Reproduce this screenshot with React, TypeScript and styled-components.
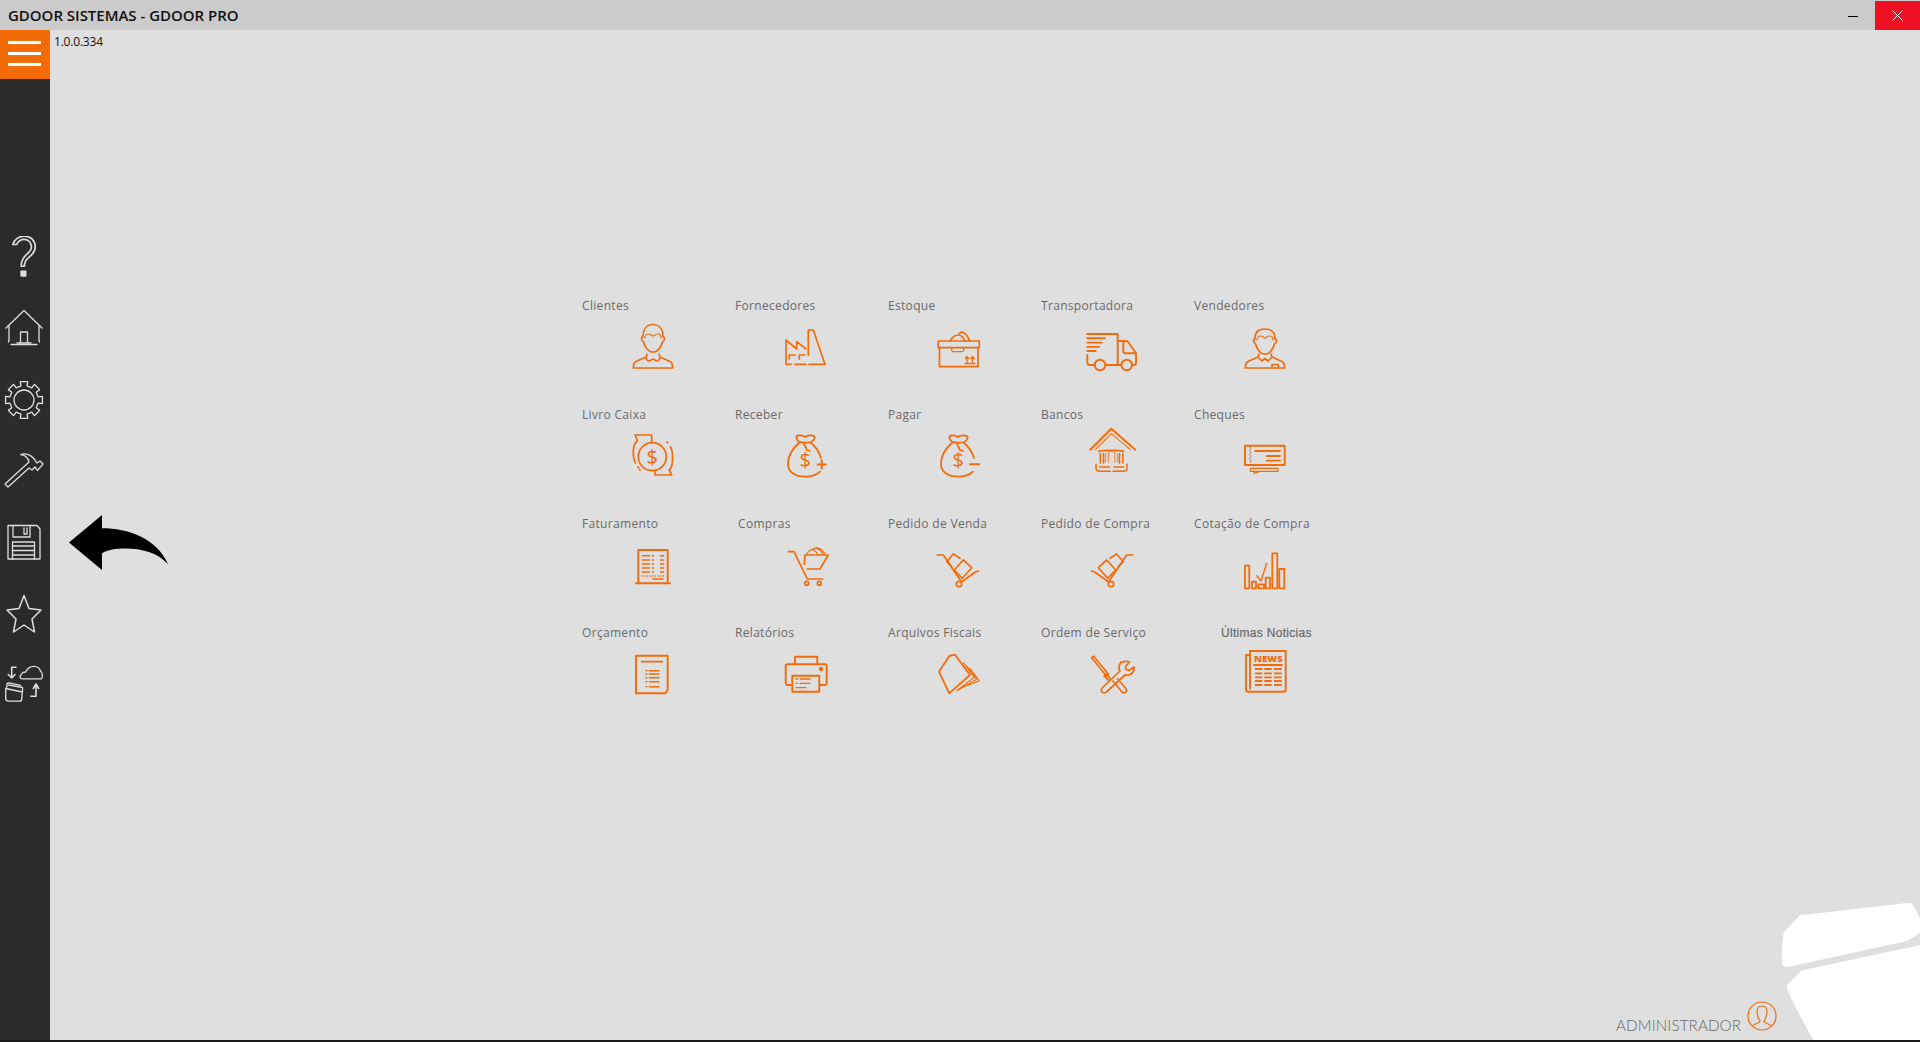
import React from "react";
import styled, { createGlobalStyle } from "styled-components";

const ORANGE = "#f26c0c";

const Global = createGlobalStyle`
  html, body { margin: 0; padding: 0; height: 100%; overflow: hidden; background: #dfdfdf; }
  #root { height: 100%; }
`;

const Page = styled.div`
  width: 1920px;
  height: 1042px;
  display: flex;
  flex-direction: column;
  position: relative;
  overflow: hidden;
  background: #dfdfdf;
  font-family: "Open Sans", sans-serif;
`;

const TitleBar = styled.header`
  height: 30px;
  flex: none;
  display: flex;
  align-items: stretch;
  background: #cbcbcb;
`;

const Title = styled.h1`
  margin: 0;
  flex: 1;
  padding-left: 8px;
  font: 600 15px/31px "Open Sans", sans-serif;
  letter-spacing: -0.02px;
  color: #111;
`;

const Minimize = styled.div`
  width: 45px;
  box-sizing: border-box;
  display: flex;
  align-items: center;
  justify-content: center;
  &::before { content: ""; width: 10px; height: 1px; background: #000; margin-top: 2px; }
`;

const Close = styled.div`
  width: 45px;
  margin-top: 1px;
  display: flex;
  align-items: center;
  justify-content: center;
  background: #ed1123;
`;

const Body = styled.div`
  flex: 1;
  display: flex;
  min-height: 0;
`;

const Sidebar = styled.nav`
  width: 50px;
  flex: none;
  display: flex;
  flex-direction: column;
  background: #2b2b2b;
`;

const MenuButton = styled.div`
  height: 49px;
  box-sizing: border-box;
  padding-bottom: 3px;
  flex: none;
  display: flex;
  flex-direction: column;
  align-items: center;
  justify-content: center;
  gap: 8px;
  background: #f26b06;
  margin-bottom: 143px;
`;

const MenuBar = styled.span`
  width: 33px;
  height: 3px;
  margin-right: 1px;
  background: #fff;
  box-shadow: 0 0 1px rgba(255, 255, 255, 0.5);
`;

const SideButton = styled.div`
  height: 71.3px;
  box-sizing: border-box;
  padding-right: 2px;
  flex: none;
  display: flex;
  align-items: center;
  justify-content: center;
`;

const SideIcon = styled.svg`
  width: 44px;
  height: 44px;
  fill: none;
  stroke: #dedede;
  stroke-width: 1.3;
  stroke-linejoin: round;
  stroke-linecap: round;
`;

const Main = styled.main`
  flex: 1;
  display: flex;
  flex-direction: column;
  min-width: 0;
`;

const Version = styled.div`
  height: 22px;
  padding: 4px 0 0 4px;
  box-sizing: border-box;
  font: 400 12px/16px "Open Sans", sans-serif;
  letter-spacing: -0.2px;
  color: #111;
`;

const Grid = styled.section`
  margin: 245px 0 0 532px;
  display: grid;
  grid-template-columns: repeat(5, 153px);
  grid-auto-rows: 109px;
`;

const Cell = styled.div`
  display: flex;
  flex-direction: column;
  align-items: flex-start;
`;

const Label = styled.span<{ $indent?: number }>`
  height: 17px;
  margin-left: ${(p) => p.$indent ?? 0}px;
  margin-bottom: 4px;
  font: 400 12px/17px "Open Sans", sans-serif;
  letter-spacing: 0.32px;
  white-space: nowrap;
  color: #6a6a6a;
`;

const NewsLabel = styled(Label)`
  font: 400 12px/19px "Liberation Sans", sans-serif;
  letter-spacing: 0.3px;
  -webkit-text-stroke: 0.2px #666;
`;

const IconSvg = styled.svg`
  width: 60px;
  height: 56px;
  margin-left: 41px;
  fill: none;
  stroke: ${ORANGE};
  stroke-width: 1.7;
  stroke-linejoin: round;
  stroke-linecap: round;
  text { fill: ${ORANGE}; stroke: none; font-family: "Open Sans", sans-serif; }
`;

const Footer = styled.footer`
  margin-top: auto;
  height: 40px;
  display: flex;
  align-items: flex-start;
  padding-left: 1566px;
`;

const UserName = styled.span`
  margin-top: 14px;
  font: 300 15.2px/22px "Lato", sans-serif;
  letter-spacing: 0.12px;
  color: #666;
`;

const UserIcon = styled.svg`
  width: 32px;
  height: 32px;
  margin: 0 0 0 5px;
  fill: none;
  stroke: ${ORANGE};
  stroke-width: 1.2;
`;

const BottomLine = styled.div`
  height: 2px;
  flex: none;
  background: #1b1b1b;
`;

const Logo = styled.svg`
  position: absolute;
  right: 0;
  bottom: 2px;
  width: 140px;
  height: 140px;
  fill: #fff;
`;

const BackArrow = styled.svg`
  position: absolute;
  left: 68px;
  top: 515px;
  width: 101px;
  height: 55px;
  fill: #000;
`;

const Icon: React.FC<{ children: React.ReactNode }> = ({ children }) => (
  <IconSvg viewBox="0 0 60 56">{children}</IconSvg>
);

const Person = ({ vendor }: { vendor?: boolean }) => {
  const dy = vendor ? 2 : 0;
  return (
    <Icon>
      <path
        d={`M20 ${19 + dy}c0-8 4-${vendor ? 10 : 12.5} 10-${vendor ? 10 : 12.5}s10 ${vendor ? 2 : 4.5} 10 ${vendor ? 10 : 12.5}c2-.5 2.2 3.6-.6 5-.9 4.5-4.400 10-9.400 10s-8.500-5.500-9.400-10c-2.800-1.400-2.600-5.500-.6-5z`}
      />
      <path d={`M22 ${20 + dy}c0-4 2-4 4-4s3 2 4 2 2-2 5-2c3 0 3 2 3 4`} strokeWidth={1.2} />
      <path d="M24 36l-1 3-10 4.500c-2 1-2.700 3-2.700 6.500h39.400c0-3.500-.7-5.500-2.700-6.500l-10-4.500-1-3" />
      {vendor ? (
        <path d="M23 39l4 4 3-2.500 3 2.500 4-4M37 50v-3.500h6.300V50" />
      ) : (
        <path d="M23 39c0 2 1.500 4 3 4s3-2 4-2 2.500 2 4 2 3-2 3-4" />
      )}
    </Icon>
  );
};

const Factory = () => (
  <Icon>
    <path d="M30 31l-9.300-7.300V31L10 22v24.300h5M19 46.300h11M33 46.300h16L37.300 12h-5v25" />
    <path d="M13.300 41v-4H19M23.300 41v-4H29" />
  </Icon>
);

const BoxIcon = () => (
  <Icon>
    <path d="M9.300 23h41v6.700h-41zM10.500 29.700v19h38.500v-19" />
    <path d="M22.700 29.700v2.500c0 1 1 1.500 2 1.500h8c1 0 2-.5 2-1.500v-2.500" strokeWidth={1.3} />
    <path d="M21 23c2-3.500 5.500-6 8.300-6 2.700 0 5.200 3 6.700 6M30.300 15.300c1-1 3-1.500 4.200-.8 2 1 4.500 4.500 6.500 8.500" />
    <path d="M38 44v-5M36.300 40.500l1.700-2 1.700 2M43.500 44v-5M41.800 40.500l1.700-2 1.700 2M36 45.500h10" strokeWidth={1.3} />
  </Icon>
);

const Truck = () => (
  <Icon>
    <g strokeWidth={1.9}>
      <path d="M5.300 16h30.400v31H23.300M5.300 37v7c0 2 1 3 2.500 3h5.400" />
      <path d="M5.300 20.300H23M5.300 24.600h14.400M5.300 28.900H17M5.300 33H13.700" />
      <circle cx={18} cy={47} r={5.300} />
      <circle cx={44.700} cy={47} r={5.300} />
      <path d="M35.700 47h3.700M50 47h2c1.300 0 2-1 2-2V35.300L46.500 24.500c-.5-1-1-1.500-2.500-1.500h-8.300M41.300 23.500v9.800c0 1.300.7 2 2 2H54" />
    </g>
  </Icon>
);

const Dollar = ({ x, y, size }: { x: number; y: number; size: number }) => (
  <text x={x} y={y} fontSize={size} textAnchor="middle">
    $
  </text>
);

const LivroCaixa = () => (
  <Icon>
    <circle cx={29.300} cy={29.700} r={14} strokeWidth={1.7} />
    <Dollar x={29.300} y={37} size={20} />
    <path d="M28.700 16V8H12l2.500 5.500c-3.500 3-4.800 9-4 15.500 .3 3 1 5 2 7" />
    <path d="M32 43v5h16.700l-2.500-5c3.500-3 3.800-8 3.300-15-.2-3-.8-6-2-8" />
    <path d="M15 40l2 3M44 15l1.500 2" strokeDasharray="1 2" />
  </Icon>
);

const MoneyBag = ({ sign }: { sign: "plus" | "minus" }) => (
  <Icon>
    <path d="M23 16c-6 5-11 12-11 21 0 8 7 12.700 17 12.700 6 0 11-1 15-5" strokeWidth={1.8} />
    <path d="M35 16c4 3 8 9 10 15" strokeWidth={1.8} />
    <path d="M23 15c-2-2-3-3.500-2.500-5.500 1-1.500 6-1.500 8.500.5 2.500-2 7.500-2 9.500-.5 .5 2-1 4-3 5.500-4 1-8 1-12.500 0z" strokeWidth={1.8} />
    <path d="M28 17l3 6 3 1" />
    <Dollar x={29.300} y={40} size={20} />
    {sign === "plus" ? (
      <path d="M41.700 37.500h8M45.700 33.500v8" strokeWidth={2} />
    ) : (
      <path d="M41 37.300h9" strokeWidth={2} />
    )}
  </Icon>
);

const Bank = () => (
  <Icon>
    <path d="M8.300 22.700L29.300 1.700 53.300 22.700" strokeWidth={2} />
    <path d="M13.300 22.700L29.300 6.700 48.300 22.700" strokeWidth={1.1} />
    <path d="M16.700 24.300c5-1.300 20-1.300 25 0" strokeWidth={1.8} />
    <path d="M18.300 36V26.500M21.500 36V26.500M37.500 36V26.500M40.800 36V26.500" strokeWidth={1.6} />
    <path d="M23.500 35V27M26.500 35V26c0-1 1-1.500 3-1.500s3.300.5 3.300 1.500v9M35.500 35V27" strokeWidth={1.2} opacity={0.7} />
    <path d="M14 37.300v4c0 2 1.700 3 4.300 3h10M45 37.300v4c0 2-1.700 3-4.300 3H31M18 40h9.500M32 40h9.500" strokeWidth={1.5} />
  </Icon>
);

const Cheque = () => (
  <Icon>
    <path d="M10 18.700h39.700V38H10z" strokeWidth={1.9} />
    <path d="M15 19.500l1 2-1.500 2 1.500 2-1.500 2 1.500 2-1.500 2 1.500 2-1 2" strokeWidth={1} />
    <path d="M20 24h25M31.700 29H45M31.700 33.700H45" strokeWidth={1.8} />
    <path d="M15.500 41.300H43v3H15.500zM20 44.500l-1 2 6-2" strokeWidth={1.3} />
  </Icon>
);

const Invoice = () => (
  <Icon>
    <path d="M15.300 47.300V14h29.400v33.300M13 47.300h34" strokeWidth={1.9} />
    <path d="M18.700 19.700H27M18.700 24H27M18.700 28H27M18.700 32H27M18.700 36H27M28.700 19.700H31M28.700 24H31M28.700 28H31M28.700 32H31M28.700 36H31M37 19.700h4.300M37 24h4.300M37 28h4.300M37 32h4.300M37 36h4.300" strokeLinecap="butt" strokeWidth={1.6} />
    <path d="M18.700 40h22.600" strokeDasharray="1.300 1.300" strokeLinecap="butt" strokeWidth={1.6} />
    <path d="M30 43h10" strokeWidth={1.5} />
  </Icon>
);

const Cart = () => (
  <Icon>
    <path d="M12.300 15.700H18l13.300 27.300h15.400" />
    <path d="M29 19h23.300L44 33H31.300M29 19l-.7 9.300" />
    <circle cx={30.700} cy={47.300} r={2} />
    <circle cx={43.300} cy={47.300} r={2} />
    <path d="M30.700 18c2-3 5-5 7-4 2 1 3 3 4 4M37 13c3-2 7 0 10 5M41 11.500c3 1 6 3 8 6" strokeWidth={1.2} />
  </Icon>
);

const HandTruck = ({ flip }: { flip?: boolean }) => (
  <Icon>
    <g transform={flip ? "matrix(-1 0 0 1 59 0)" : undefined}>
      <path d="M50.700 19H44.700L26.300 46.300M9.700 35l3.300 1.300 13.300 9.400" />
      <path d="M16.300 31.700L24.700 24l9 10-8 8.300zM28 22.300L34.700 18l6.600 7.700-5 5" />
      <circle cx={29} cy={48} r={2.700} />
    </g>
  </Icon>
);

const BarsCheck = () => (
  <Icon>
    <g strokeWidth={1.8}>
      <path d="M9.900 29.700h4.400v22.600H9.900zM17 45.700h4v6.600h-4zM23.300 48.300H29v4h-5.700zM30.700 41.700H35v10.600h-4.300zM37.300 17.300h5v35h-5zM44.300 33h5v19.300h-5z" />
      <path d="M21.700 39.700L26 45l5.700-17.700" strokeWidth={1.4} />
    </g>
  </Icon>
);

const Document = () => (
  <Icon>
    <path d="M13 10.700h31.700v34l-2 3.600H13z" strokeWidth={1.9} />
    <path d="M18.700 16.700h20.600" strokeWidth={1.8} />
    <path d="M23 25.700h1M23 29h1M23 32.700h1M23 36.700h1M23 41.700h1M26.300 25.700H36M26.300 29H36M26.300 32.700H36M26.300 36.700H36M26.300 41.700H36" strokeWidth={1.4} />
  </Icon>
);

const Printer = () => (
  <Icon>
    <g strokeWidth={1.9}>
      <path d="M19 19.300v-7.600h22.300v7.600" />
      <path d="M15 40h-3.800c-1 0-1.500-.5-1.500-1.500V21c0-1 .5-1.700 1.500-1.700h38c1 0 1.500.7 1.500 1.700v17.500c0 1-.5 1.500-1.500 1.500h-5" />
      <path d="M16.300 30.700h27v16h-27z" />
    </g>
    <circle cx={45} cy={24} r={1.400} fill={ORANGE} />
    <path d="M20 34h1.500M24 34h10M20 38.300h1.500M24 38.300h10M20 42.700h10" strokeWidth={1.3} />
  </Icon>
);

const Files = () => (
  <Icon>
    <path d="M10 26.700L20.300 11 26 9.700 41 30 23.300 45.700 20.300 48.300z" strokeWidth={1.8} />
    <path d="M34.300 17.700l11 14.600-17.600 13.400M37.700 21l10 13.300-18.400 10.700M41 23.300l9.300 12.400L31 43.300" strokeWidth={1.1} />
  </Icon>
);

const Tools = () => (
  <Icon>
    <path d="M9.700 12.700l2-1.500 14.800 18-2 2zM24 29l4 4-2 2-4-4z" strokeWidth={1.7} />
    <path d="M39 17l-2 4c-.5 2 .3 4 1 5L20 43c-1.500 2-.5 5 2 5 1 0 2-.5 3-1.500L43 30c3 .5 6 0 8-3 1-1.500 1.500-3.500 1-5l-5 3.500-3-1-.5-3 4-4.500c-3-1-6-.5-8.500 .5z" strokeWidth={1.7} />
    <path d="M31 36l9 11c2 1.500 4 1 4.500-1 0-1-.5-2-1-3l-8-9" strokeWidth={1.7} />
  </Icon>
);

const News = () => (
  <Icon>
    <path d="M15 44V6h35.700v39c0 1-.6 1.700-1.700 1.700H13c-1.300 0-2-.8-2-2V10h4" strokeWidth={1.9} />
    <text x={19} y={17} fontSize={9.500} fontWeight={800} textLength={28.700}>
      NEWS
    </text>
    <path d="M19 20h28" strokeWidth={2} />
    <path
      d="M20 24h7.300M29.300 24h7.400M39 24h7.700M20 28.300h7.300M29.300 28.300h7.400M39 28.300h7.700M20 32.300h7.300M29.300 32.300h7.400M39 32.300h7.700M20 36h7.300M29.300 36h7.400M39 36h7.700M20 40h7.300M29.300 40h7.400M39 40h7.700"
      strokeWidth={1.8}
      strokeLinecap="butt"
    />
  </Icon>
);

const items: { label: string; icon: React.ReactNode; indent?: number }[] = [
  { label: "Clientes", icon: <Person /> },
  { label: "Fornecedores", icon: <Factory /> },
  { label: "Estoque", icon: <BoxIcon /> },
  { label: "Transportadora", icon: <Truck /> },
  { label: "Vendedores", icon: <Person vendor /> },
  { label: "Livro Caixa", icon: <LivroCaixa /> },
  { label: "Receber", icon: <MoneyBag sign="plus" /> },
  { label: "Pagar", icon: <MoneyBag sign="minus" /> },
  { label: "Bancos", icon: <Bank /> },
  { label: "Cheques", icon: <Cheque /> },
  { label: "Faturamento", icon: <Invoice /> },
  { label: "Compras", icon: <Cart />, indent: 3 },
  { label: "Pedido de Venda", icon: <HandTruck flip /> },
  { label: "Pedido de Compra", icon: <HandTruck /> },
  { label: "Cotação de Compra", icon: <BarsCheck /> },
  { label: "Orçamento", icon: <Document /> },
  { label: "Relatórios", icon: <Printer /> },
  { label: "Arquivos Fiscais", icon: <Files /> },
  { label: "Ordem de Serviço", icon: <Tools /> },
];

const gearPath = (() => {
  const pts: string[] = [];
  const teeth = 8;
  for (let i = 0; i < teeth; i++) {
    const a = (i / teeth) * Math.PI * 2 - Math.PI / 2;
    const w = 0.2;
    const s = Math.PI / teeth;
    const p = (r: number, t: number) =>
      `${(22 + r * Math.cos(t)).toFixed(2)} ${(22 + r * Math.sin(t)).toFixed(2)}`;
    pts.push(`${i === 0 ? "M" : "L"}${p(14.5, a - s * 0.55)}`);
    pts.push(`L${p(18.8, a - w)}`);
    pts.push(`L${p(18.8, a + w)}`);
    pts.push(`L${p(14.5, a + s * 0.55)}`);
  }
  return pts.join(" ") + "Z";
})();

const sideIcons: React.ReactNode[] = [
  <g transform="translate(22 20) scale(1.28) translate(-22.700 -20)">
    <path d="M14 11c1-4 5-6.500 9-6.500 5 0 8.500 3.500 8.500 8.500 0 4-2.500 6-5 8-2.500 2-3.500 4-3.500 7h-2.500c0-3.500 1-6 3.500-8.500 2-2 4.500-3.500 4.500-6.500s-2-6-5.500-6c-2.500 0-5 1.500-6 4z" />
    <path d="M20.500 32h3.500v3.500h-3.500z" fill="#dedede" />
  </g>,
  <>
    <path d="M4 21L22 3.500 40 21M7 19v14l-.6 2M37 19v14l.6 2M9 37.500h26" />
    <path d="M18.500 36V25h7v11M15 36h14" />
  </>,
  <>
    <path d={gearPath} />
    <circle cx={22} cy={22} r={10} />
  </>,
  <path d="M3 34l3 3 21-19 3 2 3-3 2.500 3.400L41 14l-3-3-3 2C32 7 26 2 18.700 4.700 23 5 26 8 27 12z" />,
  <>
    <path d="M6 4.500h29l3 3.500v30H6z" />
    <path d="M11 4.500V16h17V4.500M22 7v6h3V7" />
    <path d="M10.500 38V21h22v17M10.500 25h22M10.500 29.500h22M10.500 34h22" />
  </>,
  <path d="M22 3.500l5 13 12 1.500-9 9 2.500 13L22 33l-10.500 7L14 27l-9-9 12-1.500z" strokeWidth={1.5} />,
  <>
    <path d="M20 15.800c-2.500 0-2.500-3.500-.5-4.500 .5-2 2.500-2.500 4-2 1.500-3.500 5-6 8.500-6s6 2.500 6.500 5c2 .5 2.500 5.500 1 7.500z" />
    <path d="M14 4.200H9.700v9.800M6.300 11.500L9.700 15l3.300-3.500" strokeWidth={1.6} />
    <path d="M4 25.500c.5-2 1.500-3 3-3.500l13.500 2.500v4.500M4.700 22c0-1 .5-2.200 2-2.200l12 2.500M3.700 28v7c0 2 1 3.200 3 3.200h11c1.500 0 2-.7 2-2L20.300 29 3.700 25.500z" />
    <path d="M28.700 33.200H34V21.500M31.300 25.500L34 21l2.700 4.500" strokeWidth={1.6} />
  </>,
];

export default function App() {
  return (
    <Page>
      <Global />
      <TitleBar>
        <Title>GDOOR SISTEMAS - GDOOR PRO</Title>
        <Minimize />
        <Close>
          <svg width="11" height="11" viewBox="0 0 11 11" stroke="#fff" strokeWidth="1">
            <path d="M.5.500l10 10M10.500.500l-10 10" />
          </svg>
        </Close>
      </TitleBar>
      <Body>
        <Sidebar>
          <MenuButton>
            <MenuBar />
            <MenuBar />
            <MenuBar />
          </MenuButton>
          {sideIcons.map((icon, i) => (
            <SideButton key={i}>
              <SideIcon viewBox="0 0 44 44">{icon}</SideIcon>
            </SideButton>
          ))}
        </Sidebar>
        <Main>
          <Version>1.0.0.334</Version>
          <Grid>
            {items.map((it) => (
              <Cell key={it.label}>
                <Label $indent={it.indent}>{it.label}</Label>
                {it.icon}
              </Cell>
            ))}
            <Cell>
              <NewsLabel $indent={27}>Últimas Noticias</NewsLabel>
              <News />
            </Cell>
          </Grid>
          <Footer>
            <UserName>ADMINISTRADOR</UserName>
            <UserIcon viewBox="0 0 32 32">
              <circle cx="16" cy="16" r="14" />
              <path d="M6.500 26c1.500-2 7-3 7.500-4.500 .2-1.500-3-3.500-3-9.500 0-4 2-6 5-6s5 2 5 6c0 6-3.200 8-3 9.500 .5 1.500 6 2.500 7.500 4.500" />
            </UserIcon>
          </Footer>
        </Main>
      </Body>
      <BottomLine />
      <Logo viewBox="0 0 140 140">
        <path d="M23 15l104-12c3-.300 4.500 0 6 2l7 13v13c0 2-1 3-3 4l-10 6L8 67c-3 .5-5-.5-6-3-.5-10 0-20 1.500-30 0-1 .5-2 1.500-3L19 16c1-1 2-1 4-1z" />
        <path d="M140 45L24 70c-2 .5-3 1-4 2L8 84c-1.500 1.500-1.700 2.500-1 4.500 6 15 18 37 26.500 51.500H140z" />
      </Logo>
      <BackArrow viewBox="0 0 100 55">
        <path d="M.5 27.500L33.500 0v13.300c26 0 55 10 66 36-12-14-33-17-50-15.500-6 .5-12 2-16 4.500V55z" />
      </BackArrow>
    </Page>
  );
}
